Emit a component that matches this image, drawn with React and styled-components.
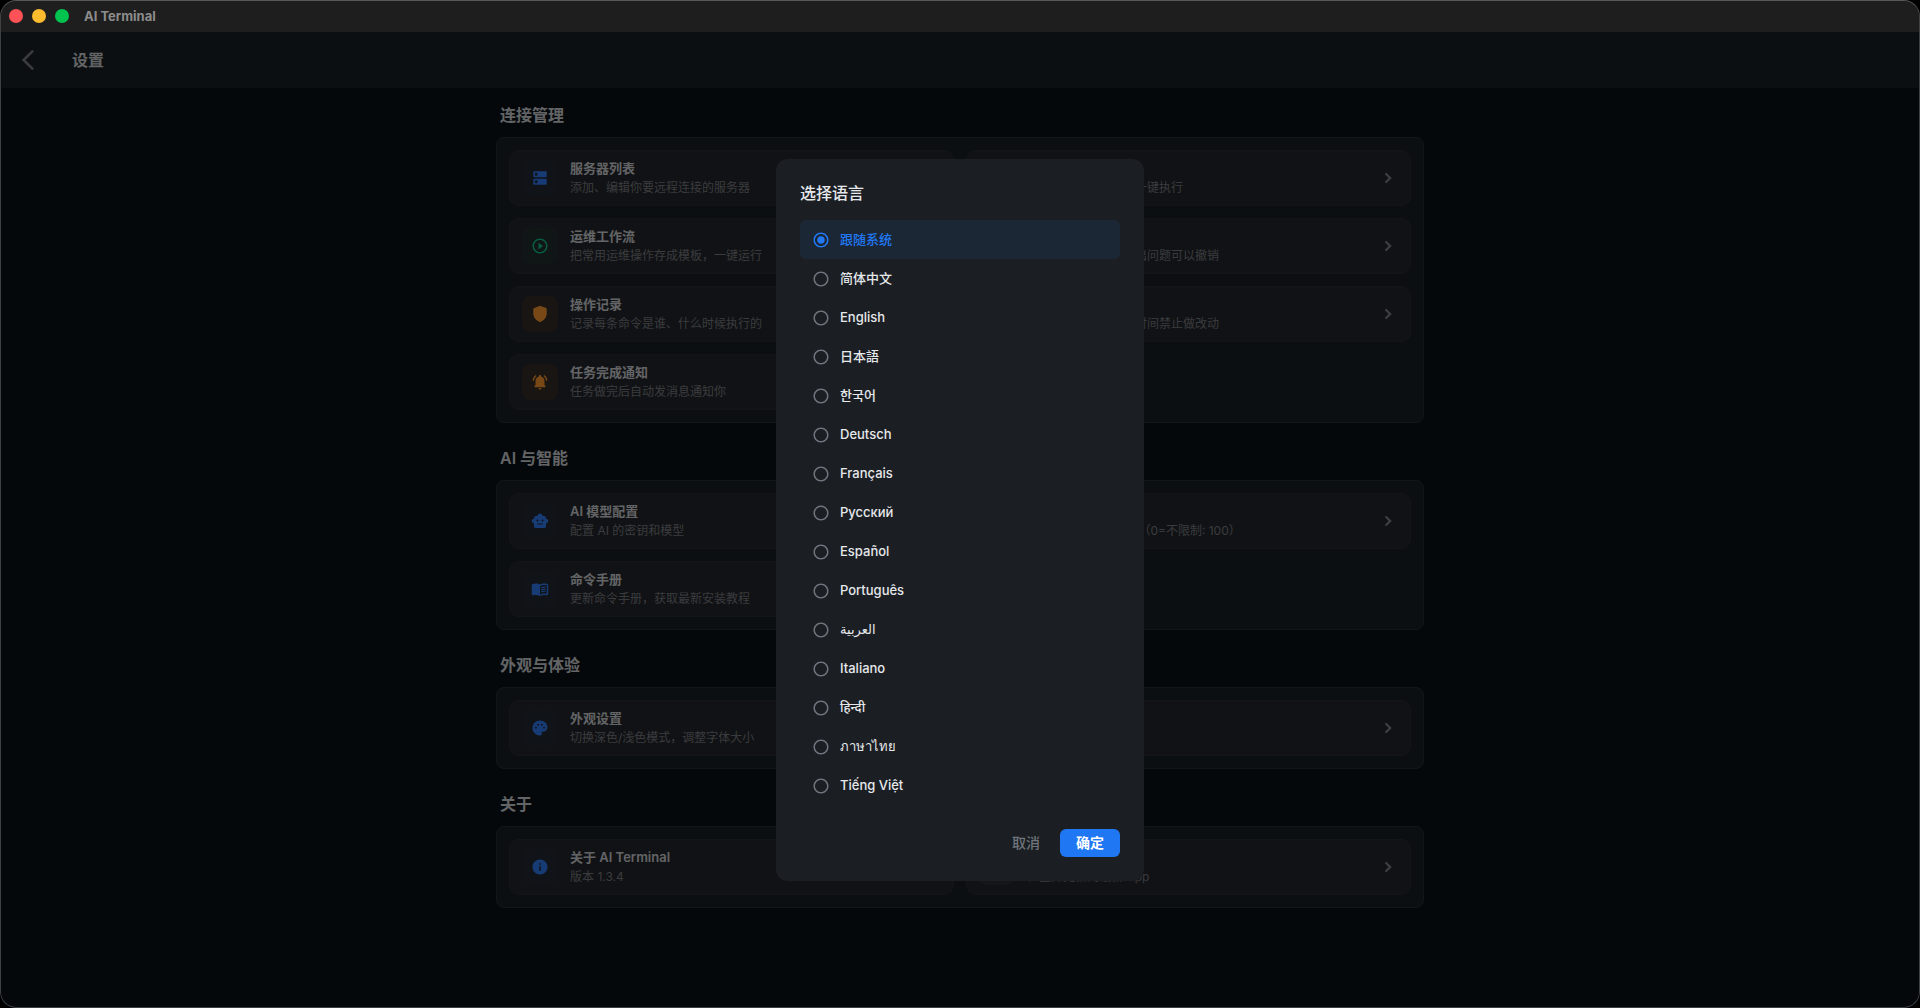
import React, { useState } from "react";
import styled, { createGlobalStyle } from "styled-components";
import {
  MdDateRange,
  MdDns,
  MdInfo,
  MdLanguage,
  MdOutlineCode,
  MdPlayCircleOutline,
  MdRadioButtonChecked,
  MdRadioButtonUnchecked,
  MdRestore,
  MdSpeed,
  MdSystemUpdate,
} from "react-icons/md";

const BackIcon = () => (
  <svg
    viewBox="0 0 24 24"
    width="24"
    height="24"
    fill="none"
    stroke="currentColor"
    strokeWidth="2.6"
    strokeLinecap="round"
  >
    <path d="M16.4 3.3 7.6 12l8.8 8.7" />
  </svg>
);

const ChevronIcon = () => (
  <svg
    viewBox="0 0 24 24"
    width="20"
    height="20"
    fill="none"
    stroke="currentColor"
    strokeWidth="2.6"
    strokeLinecap="round"
  >
    <path d="M9.8 7.2 14.6 12l-4.8 4.8" />
  </svg>
);

const ShieldIcon = () => (
  <svg viewBox="0 0 24 24" width="18" height="18" fill="currentColor">
    <path d="M11.3 1.26l-7 2.6C3.5 4.15 3 4.9 3 5.7v5.4c0 5.3 3.6 10 8.4 11.4.4.12.8.12 1.2 0C17.4 21.1 21 16.4 21 11.1V5.7c0-.83-.5-1.58-1.3-1.87l-7-2.57c-.44-.17-.94-.17-1.4 0z" />
  </svg>
);

const BellIcon = () => (
  <svg viewBox="0 0 24 24" width="18" height="18" fill="currentColor">
    <path d="M18 16v-5c0-3.07-1.64-5.64-4.5-6.32V4c0-.83-.67-1.5-1.5-1.5s-1.5.67-1.5 1.5v.68C7.63 5.36 6 7.92 6 11v5l-1.3 1.29c-.63.63-.19 1.71.7 1.71h13.17c.89 0 1.34-1.08.71-1.71L18 16zm-6.01 6c1.1 0 2-.9 2-2h-4c0 1.1.89 2 2 2zM6.77 4.73c.42-.38.43-1.03.03-1.43-.38-.38-1-.39-1.39-.02C3.7 4.84 2.52 6.96 2.14 9.34c-.09.61.38 1.16 1 1.16.48 0 .9-.35.98-.83.3-1.94 1.26-3.67 2.65-4.94zM18.6 3.28c-.4-.37-1.02-.36-1.4.02-.4.4-.38 1.04.03 1.42 1.38 1.27 2.35 3 2.65 4.94.07.48.49.83.98.83.61 0 1.09-.55.99-1.16-.38-2.37-1.55-4.48-3.25-6.05z" />
  </svg>
);

const RobotIcon = () => (
  <svg viewBox="0 0 24 24" width="18" height="18" fill="currentColor">
    <path
      fillRule="evenodd"
      d="M20 9c0-2.4-1.4-4-3.6-4H15c0-1.66-1.34-3-3-3S9 3.34 9 5H7.6C5.4 5 4 6.6 4 9c-1.66 0-3 1.34-3 3s1.34 3 3 3v4c0 1.4.9 2.4 2.2 2.4h11.6c1.3 0 2.2-1 2.2-2.4v-4c1.66 0 3-1.34 3-3s-1.34-3-3-3zM7.3 11.3a1.3 1.3 0 1 0 2.6 0 1.3 1.3 0 1 0-2.6 0zM14.1 11.3a1.3 1.3 0 1 0 2.6 0 1.3 1.3 0 1 0-2.6 0zM8.5 15.2h7v1.5h-7z"
    />
  </svg>
);

const BookIcon = () => (
  <svg viewBox="0 0 24 24" width="18" height="18" fill="currentColor">
    <path
      fillRule="evenodd"
      d="M21 5c-1.11-.35-2.33-.5-3.5-.5-1.95 0-4.05.4-5.5 1.5-1.45-1.1-3.55-1.5-5.5-1.5-1.45 0-2.99.22-4.28.79C1.49 5.62 1 6.33 1 7.14v11.28c0 1.3 1.22 2.26 2.48 1.94.98-.25 2.02-.36 3.02-.36 1.56 0 3.22.26 4.56.92.6.3 1.28.3 1.87 0 1.34-.67 3-.92 4.56-.92 1 0 2.04.11 3.02.36 1.26.33 2.48-.63 2.48-1.94V7.14c0-.81-.49-1.52-1.22-1.85-.25-.12-.51-.21-.77-.29zM21 17.23c0 .63-.58 1.09-1.2.98-.75-.14-1.53-.2-2.3-.2-1.7 0-4.15.65-5.5 1.5V8c1.35-.85 3.8-1.5 5.5-1.5.92 0 1.83.09 2.7.28.46.1.8.51.8.98v9.47z"
    />
    <path d="M13.5 9.6q3-1.2 6-.7v1.5q-3-.5-6 .7zM13.5 12.3q3-1.2 6-.7v1.5q-3-.5-6 .7zM13.5 15q3-1.2 6-.7v1.5q-3-.5-6 .7z" />
  </svg>
);

const PaletteIcon = () => (
  <svg viewBox="0 0 24 24" width="18" height="18" fill="currentColor">
    <path
      fillRule="evenodd"
      d="M12 2C6.49 2 2 6.49 2 12s4.49 10 10 10c1.38 0 2.5-1.12 2.5-2.5 0-.61-.23-1.2-.64-1.67-.08-.1-.13-.21-.13-.33 0-.28.22-.5.5-.5H16c3.31 0 6-2.69 6-6 0-4.96-4.49-9-10-9zM5.2 11.5a1.3 1.3 0 1 0 2.6 0 1.3 1.3 0 1 0-2.6 0zM8.2 7.5a1.3 1.3 0 1 0 2.6 0 1.3 1.3 0 1 0-2.6 0zM13.2 7.5a1.3 1.3 0 1 0 2.6 0 1.3 1.3 0 1 0-2.6 0zM16.2 11.5a1.3 1.3 0 1 0 2.6 0 1.3 1.3 0 1 0-2.6 0z"
    />
  </svg>
);

const sections = [
  {
    title: "连接管理",
    items: [
      { icon: MdDns, tone: "blue", name: "服务器列表", desc: "添加、编辑你要远程连接的服务器" },
      { icon: MdOutlineCode, tone: "blue", name: "命令片段", desc: "保存常用命令片段，一键执行" },
      { icon: MdPlayCircleOutline, tone: "green", name: "运维工作流", desc: "把常用运维操作存成模板，一键运行" },
      { icon: MdRestore, tone: "blue", name: "备份与撤销", desc: "修改前先自动备份，出问题可以撤销" },
      { icon: ShieldIcon, tone: "orange", name: "操作记录", desc: "记录每条命令是谁、什么时候执行的" },
      { icon: MdDateRange, tone: "orange", name: "维护窗口", desc: "设置维护窗口，其他时间禁止做改动" },
      { icon: BellIcon, tone: "orange", name: "任务完成通知", desc: "任务做完后自动发消息通知你" },
    ],
  },
  {
    title: "AI 与智能",
    items: [
      { icon: RobotIcon, tone: "blue", name: "AI 模型配置", desc: "配置 AI 的密钥和模型" },
      { icon: MdSpeed, tone: "blue", name: "执行步数", desc: "单次任务最多执行数 （0=不限制: 100）" },
      { icon: BookIcon, tone: "blue", name: "命令手册", desc: "更新命令手册，获取最新安装教程" },
    ],
  },
  {
    title: "外观与体验",
    items: [
      { icon: PaletteIcon, tone: "blue", name: "外观设置", desc: "切换深色/浅色模式，调整字体大小" },
      { icon: MdLanguage, tone: "blue", name: "语言", desc: "跟随系统" },
    ],
  },
  {
    title: "关于",
    items: [
      { icon: MdInfo, tone: "blue", name: "关于 AI Terminal", desc: "版本 1.3.4" },
      { icon: MdSystemUpdate, tone: "grey", name: "检查更新", desc: "检查并更新到最新 App" },
    ],
  },
];

const languages = [
  { code: "system", label: "跟随系统" },
  { code: "zh-CN", label: "简体中文" },
  { code: "en", label: "English" },
  { code: "ja", label: "日本語" },
  { code: "ko", label: "한국어" },
  { code: "de", label: "Deutsch" },
  { code: "fr", label: "Français" },
  { code: "ru", label: "Русский" },
  { code: "es", label: "Español" },
  { code: "pt", label: "Português" },
  { code: "ar", label: "العربية" },
  { code: "it", label: "Italiano" },
  { code: "hi", label: "हिन्दी" },
  { code: "th", label: "ภาษาไทย" },
  { code: "vi", label: "Tiếng Việt" },
];

const tones = {
  blue: { color: "#2e76ea", background: "#21262f" },
  green: { color: "#10b981", background: "#212a2a" },
  orange: { color: "#f0922e", background: "#302a25" },
  grey: { color: "#8a8f98", background: "#2b2c31" },
};

function App() {
  const [language, setLanguage] = useState("system");

  return (
    <>
      <GlobalStyle />
      <Window>
        <TitleBar>
          <Light color="#ff5257" />
          <Light color="#fdbc2e" />
          <Light color="#00c24e" />
          <WindowTitle>AI Terminal</WindowTitle>
        </TitleBar>

        <Screen>
          <Header>
            <BackButton aria-label="返回">
              <BackIcon />
            </BackButton>
            <h1>设置</h1>
          </Header>

          <Main>
            {sections.map((section) => (
              <section key={section.title}>
                <SectionTitle>{section.title}</SectionTitle>
                <Panel>
                  {section.items.map((item) => {
                    const Icon = item.icon;
                    return (
                      <Item key={item.name}>
                        <IconBox $tone={item.tone}>
                          <Icon size={18} />
                        </IconBox>
                        <ItemText>
                          <strong>{item.name}</strong>
                          <small>{item.desc}</small>
                        </ItemText>
                        <ChevronIcon />
                      </Item>
                    );
                  })}
                </Panel>
              </section>
            ))}
          </Main>

          <Scrim>
            <Dialog role="dialog" aria-labelledby="language-title">
              <h2 id="language-title">选择语言</h2>
              <OptionList>
                {languages.map(({ code, label }) => (
                  <Option key={code} $active={code === language}>
                    <Radio
                      type="radio"
                      name="language"
                      value={code}
                      checked={code === language}
                      onChange={() => setLanguage(code)}
                    />
                    {code === language ? (
                      <MdRadioButtonChecked size={18} />
                    ) : (
                      <MdRadioButtonUnchecked size={18} />
                    )}
                    <span>{label}</span>
                  </Option>
                ))}
              </OptionList>
              <Actions>
                <CancelButton>取消</CancelButton>
                <ConfirmButton>确定</ConfirmButton>
              </Actions>
            </Dialog>
          </Scrim>
        </Screen>
      </Window>
    </>
  );
}

export default App;

const GlobalStyle = createGlobalStyle`
  * {
    box-sizing: border-box;
  }
  body {
    margin: 0;
    background: #000;
    font-family: Inter, "Noto Sans CJK SC", "Noto Sans", "DejaVu Sans", sans-serif;
  }
  h1, h2 {
    margin: 0;
  }
  button {
    padding: 0;
    border: 0;
    background: none;
    font-family: inherit;
    cursor: pointer;
  }
`;

const Window = styled.div`
  display: flex;
  flex-direction: column;
  min-height: 100vh;
  overflow: hidden;
  position: relative;
  border-radius: 16px;
  background: #081016;
  /* hairline over the content, so it takes no room */
  &:after {
    content: "";
    position: absolute;
    inset: 0;
    border: 1px solid #3e4042;
    border-top-color: #58595a;
    border-radius: 16px;
    pointer-events: none;
  }
`;

const TitleBar = styled.div`
  display: flex;
  align-items: center;
  gap: 9px;
  height: 32px;
  padding-left: 9px;
  background: #1e1e1e;
`;

const Light = styled.span`
  width: 14px;
  height: 14px;
  border-radius: 50%;
  background: ${(props) => props.color};
`;

const WindowTitle = styled.span`
  margin-left: 6px;
  font-size: 13px;
  font-weight: 700;
  color: #8c8c8c;
`;

const Screen = styled.div`
  position: relative;
  flex: 1;
`;

const Header = styled.header`
  display: flex;
  align-items: center;
  gap: 32px;
  height: 56px;
  padding: 0 16px;
  background: #171e23;
  h1 {
    padding-bottom: 2px;
    font-size: 16px;
    font-weight: 600;
    color: #c6c9cc;
  }
`;

const BackButton = styled.button`
  display: flex;
  color: #74777b;
`;

const Main = styled.main`
  display: flex;
  flex-direction: column;
  gap: 24px;
  width: 100%;
  max-width: 960px;
  margin: 0 auto;
  padding: 16px;
`;

const SectionTitle = styled.h2`
  margin: 0 0 10px 4px;
  font-size: 16px;
  line-height: 23px;
  font-weight: 600;
  color: #c6c9cc;
`;

const Panel = styled.div`
  display: grid;
  grid-template-columns: 1fr 1fr;
  gap: 12px;
  padding: 12px;
  border: 1px solid #272d32;
  border-radius: 8px;
  background: #161e23;
`;

const Item = styled.button`
  display: flex;
  align-items: center;
  gap: 12px;
  height: 56px;
  padding: 0 12px;
  border: 1px solid #272a2e;
  border-radius: 10px;
  background: #23252a;
  color: #7c7f84;
  text-align: left;
`;

const IconBox = styled.span`
  display: flex;
  align-items: center;
  justify-content: center;
  width: 36px;
  height: 36px;
  border-radius: 8px;
  color: ${(props) => tones[props.$tone].color};
  background: ${(props) => tones[props.$tone].background};
`;

const ItemText = styled.span`
  display: flex;
  flex: 1;
  flex-direction: column;
  gap: 2px;
  min-width: 0;
  white-space: nowrap;
  strong {
    font-size: 13px;
    line-height: 18px;
    font-weight: 600;
    color: #c6c9cc;
  }
  small {
    font-size: 12px;
    line-height: 18px;
    color: #74777c;
  }
`;

const Scrim = styled.div`
  position: absolute;
  inset: 0;
  display: flex;
  align-items: center;
  justify-content: center;
  background: rgba(0, 0, 0, 0.5);
`;

const Dialog = styled.div`
  width: 368px;
  padding: 24px;
  border-radius: 12px;
  background: #1b1f24;
  h2 {
    margin-bottom: 16px;
    font-size: 16px;
    line-height: 21px;
    font-weight: 500;
    color: #e6e8eb;
  }
`;

const OptionList = styled.div`
  margin-bottom: 24px;
`;

const Option = styled.label`
  position: relative;
  display: flex;
  align-items: center;
  gap: 10px;
  height: 39px;
  padding: 0 12px;
  border-radius: 6px;
  background: ${(props) => (props.$active ? "#1b2735" : "transparent")};
  color: ${(props) => (props.$active ? "#2179f5" : "#70757d")};
  cursor: pointer;
  span {
    padding-bottom: 2px;
    font-size: 13px;
    line-height: 18px;
    font-weight: 500;
    color: ${(props) => (props.$active ? "#2179f5" : "#e6e8eb")};
  }
`;

const Radio = styled.input`
  position: absolute;
  width: 18px;
  height: 18px;
  margin: 0;
  opacity: 0;
`;

const Actions = styled.div`
  display: flex;
  justify-content: flex-end;
  gap: 4px;
`;

const DialogButton = styled.button`
  height: 28px;
  padding: 0 16px 2px;
  border-radius: 6px;
  font-size: 14px;
`;

const CancelButton = styled(DialogButton)`
  font-weight: 500;
  color: #70757d;
`;

const ConfirmButton = styled(DialogButton)`
  font-weight: 600;
  color: #fff;
  background: #1f77f4;
`;
